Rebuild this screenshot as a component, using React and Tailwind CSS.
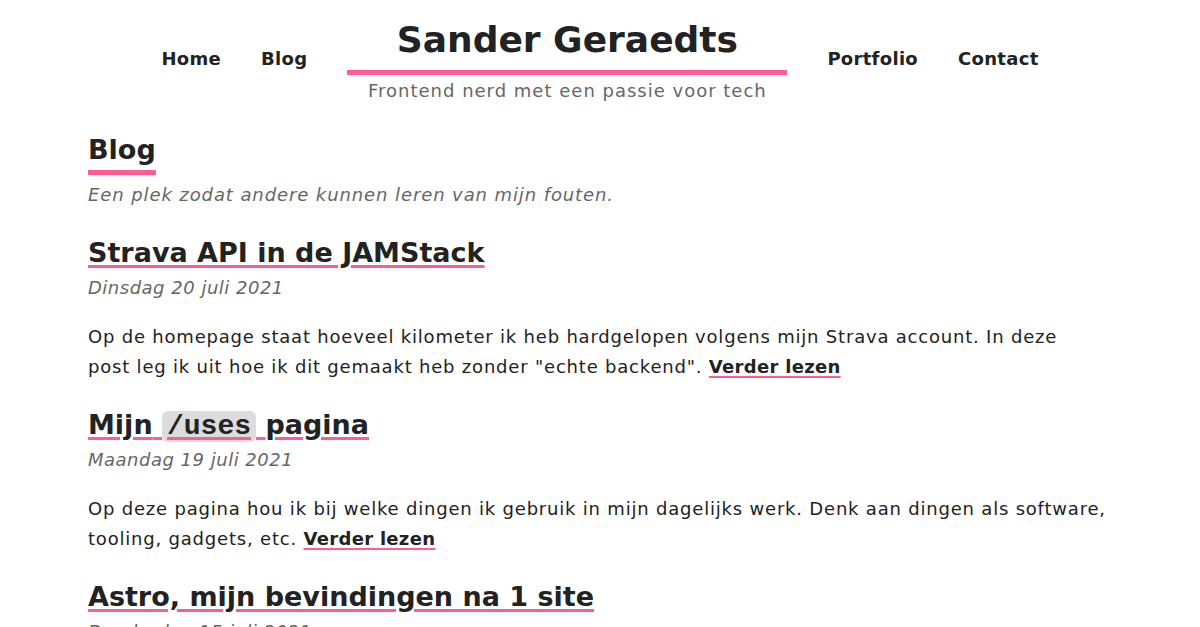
const posts = [
  {
    title: <>Strava API in de JAMStack</>,
    date: 'Dinsdag 20 juli 2021',
    excerpt:
      'Op de homepage staat hoeveel kilometer ik heb hardgelopen volgens mijn Strava account. In deze post leg ik uit hoe ik dit gemaakt heb zonder "echte backend".',
    wrap: 'pr-[14px]',
  },
  {
    title: (
      <>
        Mijn{' '}
        <code className="font-['Liberation_Mono',monospace] text-[28px] leading-none font-bold bg-[#dcdcdc] rounded-md px-[5px] tracking-normal">/uses</code>{' '}
        pagina
      </>
    ),
    date: 'Maandag 19 juli 2021',
    excerpt:
      'Op deze pagina hou ik bij welke dingen ik gebruik in mijn dagelijks werk. Denk aan dingen als software, tooling, gadgets, etc.',
    wrap: '',
  },
  {
    title: <>Astro, mijn bevindingen na 1 site</>,
    date: 'Donderdag 15 juli 2021',
    excerpt: '',
    wrap: '',
  },
];

function NavLink({ children }) {
  return (
    <a href="#" className="text-[18px] font-bold tracking-[0.3px] text-[#222] pb-1">
      {children}
    </a>
  );
}

export default function App() {
  return (
    <div className="min-h-screen bg-white text-[#222] font-['DejaVu_Sans',sans-serif]">
      {/* Kop met navigatie */}
      <header className="flex items-center justify-center gap-10 pt-[14px]">
        <NavLink>Home</NavLink>
        <NavLink>Blog</NavLink>
        <div className="w-[440px] text-center">
          <h1 className="text-[36px] font-bold leading-[52px] border-b-[5px] border-[#ff5c97] pb-[4px]">
            Sander Geraedts
          </h1>
          <p className="text-[18px] tracking-[1px] text-[#666] leading-[30px] mt-[1px]">
            Frontend nerd met een passie voor tech
          </p>
        </div>
        <NavLink>Portfolio</NavLink>
        <NavLink>Contact</NavLink>
      </header>

      <main className="max-w-[1024px] mx-auto mt-[24px]">
        <h2 className="inline-block text-[27px] font-bold leading-[40px] border-b-[5px] border-[#ff5c97]">Blog</h2>
        <p className="italic text-[18px] tracking-[0.9px] text-[#666] leading-[30px] mt-[5px]">
          Een plek zodat andere kunnen leren van mijn fouten.
        </p>

        {posts.map((post, i) => (
          <article key={i} className="mt-[23px]">
            <h3 className="text-[27px] font-bold leading-[40px]">
              <a href="#" className="underline decoration-[#ff5c97] decoration-[3px] underline-offset-[3px]">
                {post.title}
              </a>
            </h3>
            <p className="italic text-[18px] tracking-[0.5px] text-[#666] leading-[30px]">{post.date}</p>
            {post.excerpt && (
              <p className={`text-[18px] tracking-[0.8px] leading-[30px] mt-[19px] ${post.wrap}`}>
                {post.excerpt}{' '}
                <a href="#" className="font-bold tracking-[0.3px] underline decoration-[#ff5c97] decoration-2 underline-offset-[3px]">
                  Verder lezen
                </a>
              </p>
            )}
          </article>
        ))}
      </main>
    </div>
  );
}
